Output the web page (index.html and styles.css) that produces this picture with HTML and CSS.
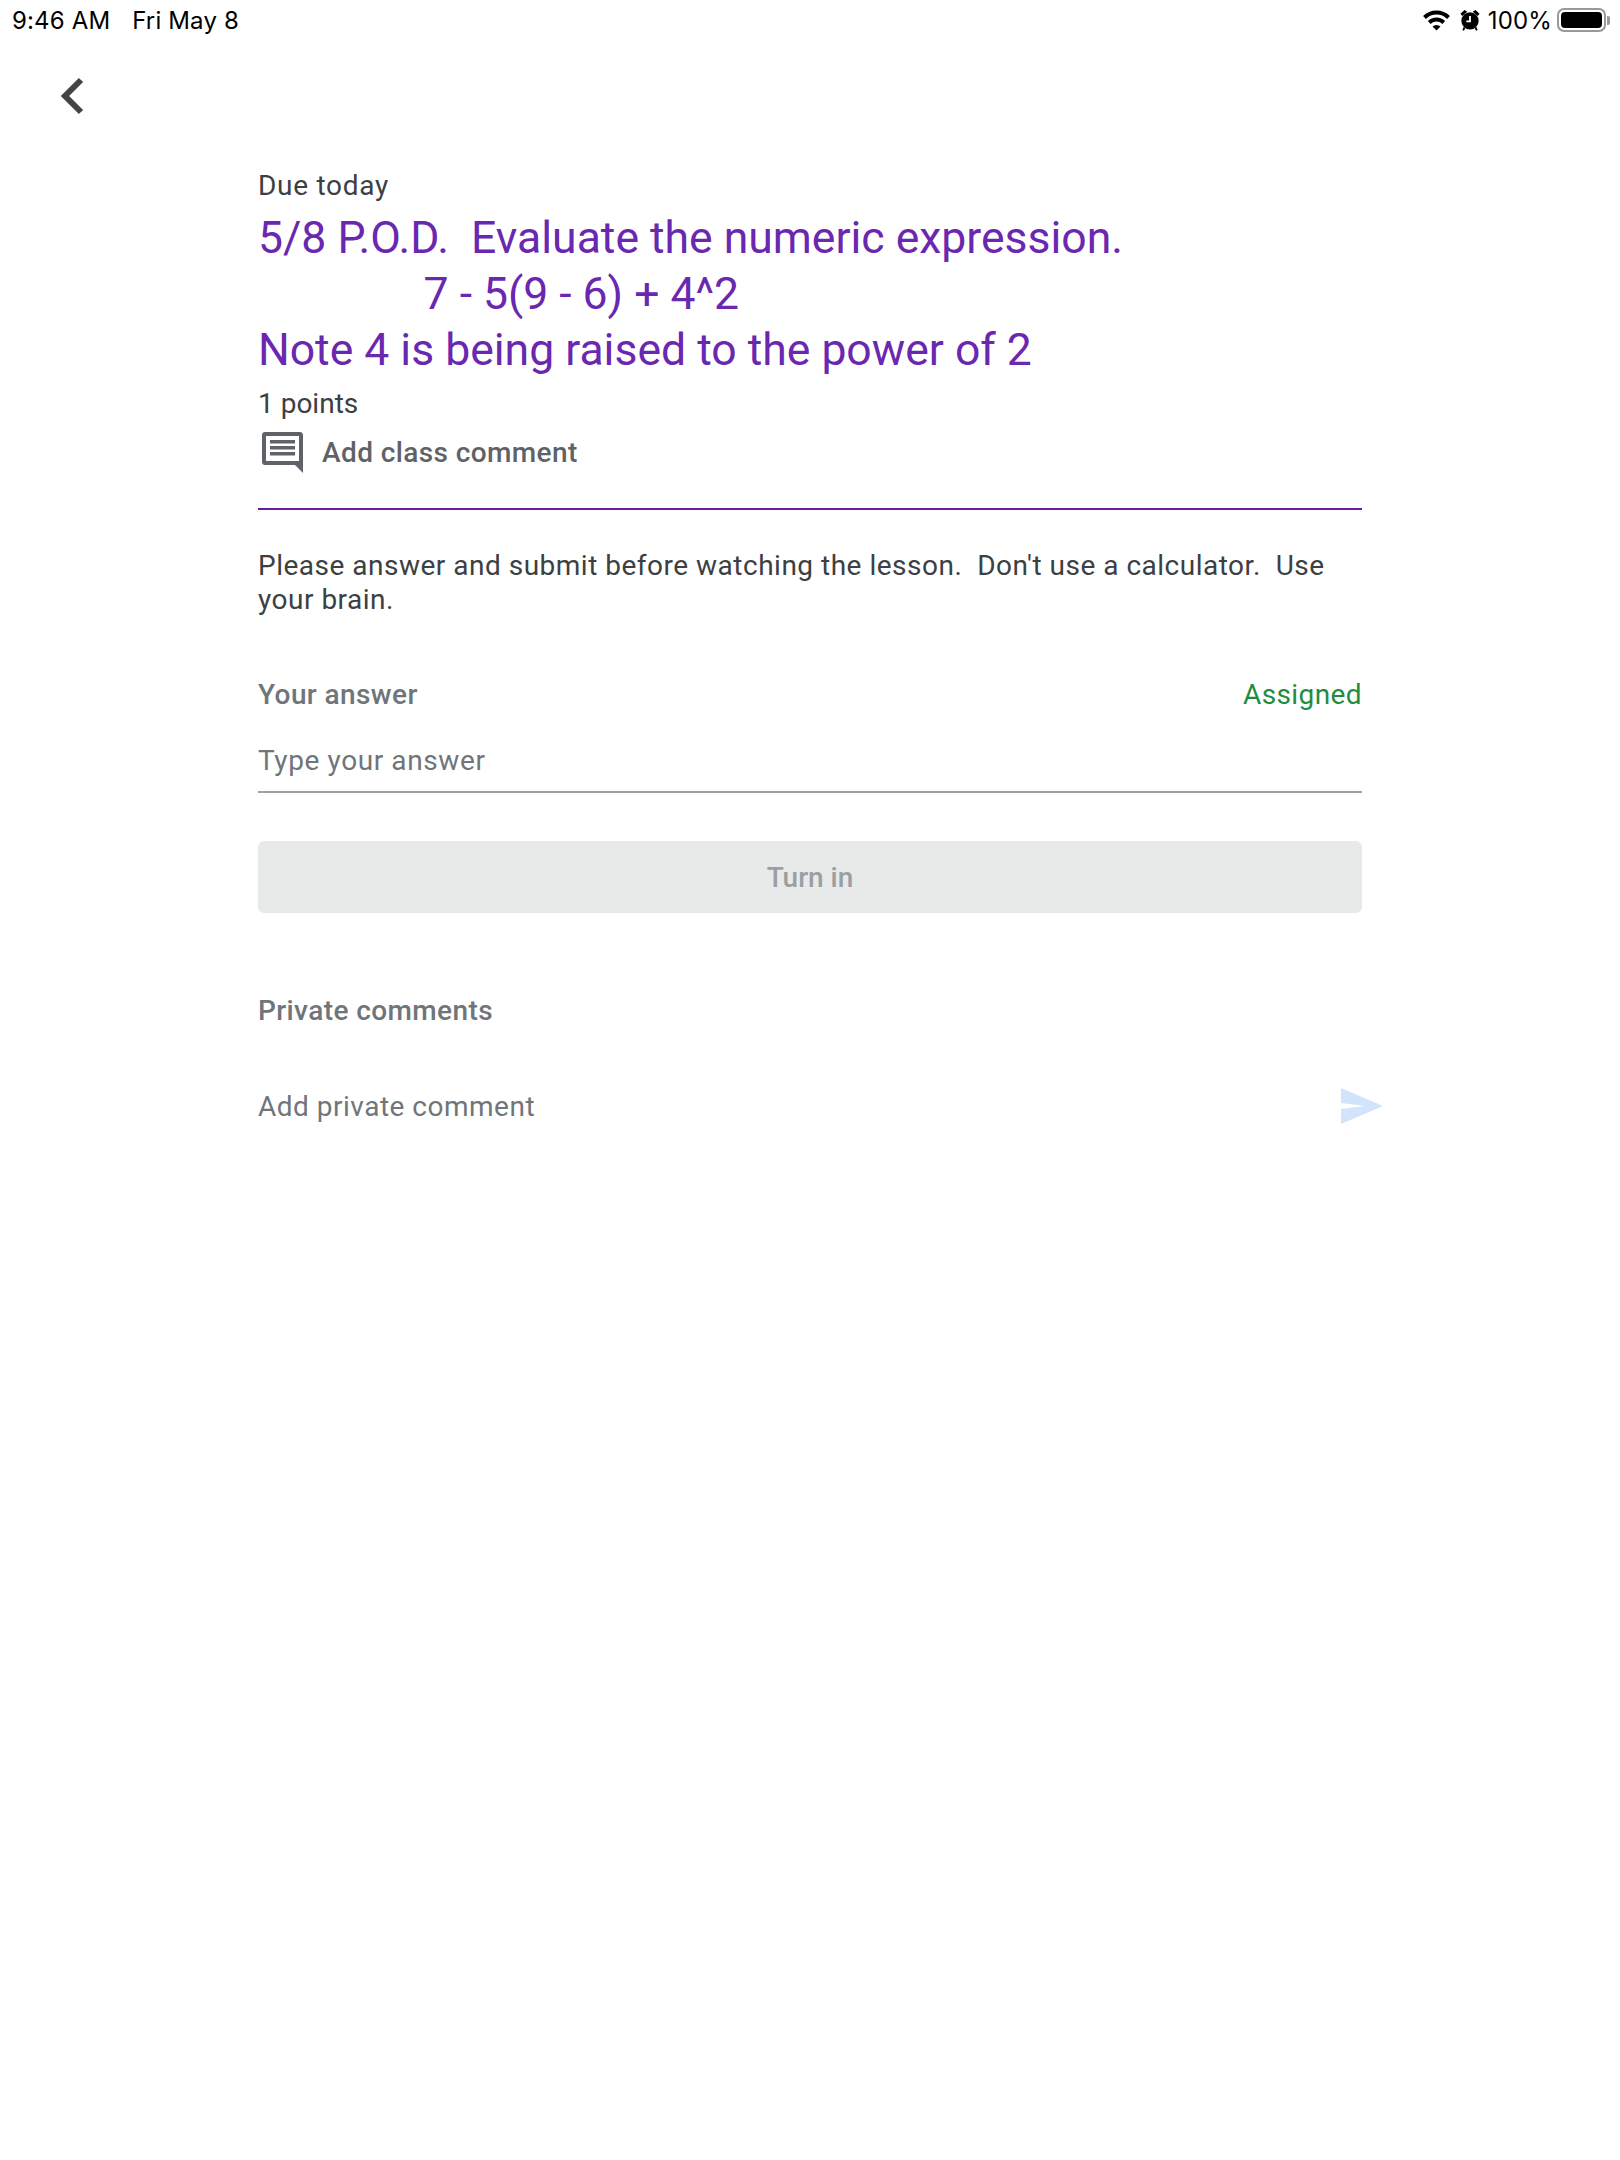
FILE: index.html
```html
<!DOCTYPE html>
<html>
<head>
    <meta charset="UTF-8">
    <title>Assignment</title>
    <link rel="stylesheet" href="styles.css">
</head>
<body>
    <div class="status-bar">
        <div class="status-left">
            <span>9:46 AM</span>
            <span>Fri May 8</span>
        </div>
        <div class="status-right">
            <svg class="wifi" width="27" height="22" viewBox="0 0 27 22">
                <path d="M1.500 8.500A17 17 0 0 1 25.500 8.500" fill="none" stroke="#000" stroke-width="4"/>
                <path d="M6.200 13.500A10.500 10.500 0 0 1 20.800 13.500" fill="none" stroke="#000" stroke-width="4"/>
                <path d="M9.500 17.500A6 6 0 0 1 17.500 17.500L13.500 21.500Z"/>
            </svg>
            <svg class="alarm" width="20" height="22" viewBox="0 0 22 24">
                <path d="M5 1L.5 5L2.500 7.500L8 3Z"/>
                <path d="M17 1L21.500 5L19.500 7.500L14 3Z"/>
                <circle cx="11" cy="13" r="9.500"/>
                <path d="M5 20L3.500 23.500M17 20L18.500 23.500" stroke="#000" stroke-width="2"/>
                <path d="M11 7.500V13.500H7" fill="none" stroke="#fff" stroke-width="2"/>
            </svg>
            <span class="battery-pct">100%</span>
            <div class="battery">
                <div class="battery-fill"></div>
            </div>
            <div class="battery-cap"></div>
        </div>
    </div>

    <div class="top-nav">
        <svg width="28" height="44" viewBox="0 0 28 44">
            <path d="M23 6L7 22L23 38" fill="none" stroke="#444" stroke-width="6"/>
        </svg>
    </div>

    <div class="content">
        <div class="due">Due today</div>
        <h1 class="title">5/8 P.O.D.  Evaluate the numeric expression.
               7 - 5(9 - 6) + 4^2
Note 4 is being raised to the power of 2</h1>
        <div class="points">1 points</div>
        <div class="class-comment">
            <svg width="41" height="41" viewBox="0 0 41 41">
                <path d="M3 0H38C39.700 0 41 1.300 41 3V41L33 33H3C1.300 33 0 31.700 0 30V3C0 1.300 1.300 0 3 0ZM4 4V29H37V4Z" fill="#5f6368" fill-rule="evenodd"/>
                <path d="M8 8H33V11.500H8ZM8 14H33V17.500H8ZM8 20H33V23.500H8Z" fill="#5f6368"/>
            </svg>
            <span>Add class comment</span>
        </div>
        <div class="divider"></div>
        <p class="description">Please answer and submit before watching the lesson.  Don't use a calculator.  Use your brain.</p>
        <div class="answer-head">
            <span class="answer-label">Your answer</span>
            <span class="assigned">Assigned</span>
        </div>
        <div class="answer-input">Type your answer</div>
        <button class="turn-in">Turn in</button>
        <div class="private-label">Private comments</div>
        <div class="private-row">
            <span>Add private comment</span>
            <svg class="send" width="44" height="38" viewBox="0 0 44 38">
                <path d="M1 1L43 19L1 37V22L25 19L1 16Z" fill="#d2e3fc"/>
            </svg>
        </div>
    </div>
</body>
</html>
```

FILE: styles.css
```css
body {
    margin: 0;
    background-color: #fff;
    font-family: Roboto, sans-serif;
    color: #3c4043;
}

.status-bar {
    display: flex;
    justify-content: space-between;
    align-items: center;
    height: 40px;
    padding: 0 10px 0 12px;
    font-family: Inter, sans-serif;
    font-size: 24px;
    letter-spacing: .15px;
    color: #000;
}

.status-left {
    display: flex;
    gap: 22px;
}

.status-right {
    display: flex;
    align-items: center;
}

.wifi {
    margin-right: 10px;
}

.alarm {
    margin-right: 8px;
}

.battery-pct {
    margin-right: 5px;
}

.battery {
    width: 49px;
    height: 24px;
    box-sizing: border-box;
    border: 2px solid #999;
    border-radius: 7px;
    padding: 2px;
}

.battery-fill {
    height: 100%;
    background-color: #000;
    border-radius: 4px;
}

.battery-cap {
    width: 3px;
    height: 9px;
    margin-left: 1px;
    background-color: #999;
    border-radius: 0 2px 2px 0;
}

.top-nav {
    height: 127px;
    padding: 34px 0 0 58px;
    box-sizing: border-box;
}

.content {
    width: 1104px;
    margin-left: 258px;
}

.due {
    font-size: 28px;
    letter-spacing: .7px;
    line-height: 38px;
}

.title {
    margin: 5px 0 0;
    font-size: 44.500px;
    font-weight: 400;
    line-height: 56px;
    color: #6a27b0;
    white-space: pre-wrap;
}

.points {
    font-size: 28px;
    line-height: 36px;
    margin-top: 8px;
}

.class-comment {
    display: flex;
    align-items: center;
    gap: 19px;
    height: 48px;
    margin-top: 6px;
    padding-left: 4px;
    font-size: 28px;
    font-weight: 500;
    letter-spacing: .4px;
    color: #5f6368;
}

.divider {
    height: 2px;
    margin-top: 32px;
    background-color: #6a1b9a;
}

.description {
    margin: 39px 0 0;
    font-size: 28px;
    letter-spacing: .5px;
    line-height: 34px;
    white-space: pre-wrap;
}

.answer-head {
    display: flex;
    justify-content: space-between;
    margin-top: 61px;
    font-size: 28px;
    letter-spacing: .4px;
    line-height: 34px;
}

.answer-label {
    font-weight: 500;
    color: #70757a;
}

.assigned {
    color: #1e8e3e;
}

.answer-input {
    height: 60px;
    padding-top: 11px;
    box-sizing: border-box;
    margin-top: 21px;
    border-bottom: 2px solid #9aa0a6;
    font-size: 28px;
    letter-spacing: .6px;
    line-height: 34px;
    color: #70757a;
}

.turn-in {
    display: block;
    width: 100%;
    height: 72px;
    margin-top: 48px;
    border: none;
    border-radius: 6px;
    background-color: #e8eaea;
    font-family: Roboto, sans-serif;
    font-size: 28px;
    font-weight: 500;
    color: #9b9fa3;
}

.private-label {
    margin-top: 81px;
    font-size: 28px;
    font-weight: 500;
    letter-spacing: .4px;
    line-height: 34px;
    color: #70757a;
}

.private-row {
    display: flex;
    justify-content: space-between;
    align-items: center;
    width: 1126px;
    margin-top: 59px;
    font-size: 28px;
    letter-spacing: .5px;
    color: #70757a;
}
```
